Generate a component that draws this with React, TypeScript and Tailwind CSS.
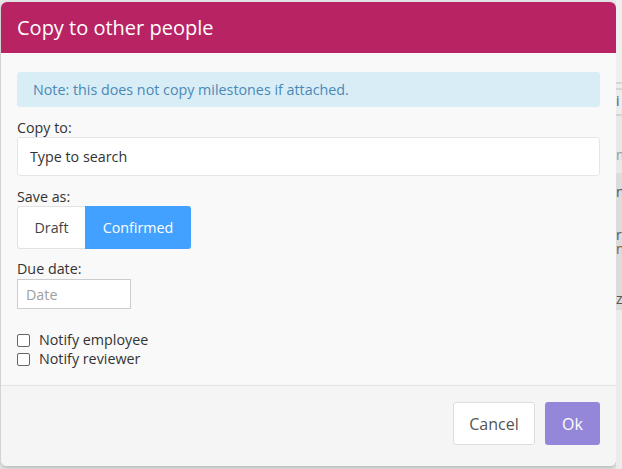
import React from "react";

function Backdrop() {
  // sliver of the page behind the modal, visible on the right edge
  return (
    <div className="flex h-full w-[6px] flex-col overflow-hidden text-[14px] leading-[14px] text-[#555]">
      <div className="h-[82px] shrink-0 bg-[#efefef]" />
      <div className="h-[2px] shrink-0 bg-[#d6d6d6]" />
      <div className="h-[4px] shrink-0 bg-[#ededed]" />
      <div className="h-[2px] shrink-0 bg-[#d6d6d6]" />
      <div className="h-[24px] shrink-0 bg-[#ececec] pt-[4px]">i</div>
      <div className="h-[2px] shrink-0 bg-[#d3d3d3]" />
      <div className="h-[57px] shrink-0 bg-[#e8e8e8] pt-[32px] text-[#999]">m</div>
      <div className="flex h-[137px] shrink-0 flex-col bg-[#dcdcdc] pt-[12px]">
        <span>n</span>
        <span className="mt-[29px]">r</span>
        <span className="text-[#8a5a2a]">n</span>
        <span className="mt-[36px]">z</span>
      </div>
      <div className="flex-1 bg-[#ececec]" />
    </div>
  );
}

export default function App() {
  return (
    <div
      className="flex h-[469px] w-[622px] overflow-hidden bg-[#e6e6e6]"
      style={{ fontFamily: '"Open Sans", "Noto Sans", sans-serif' }}
    >
      <div className="ml-[1px] mt-[2px] flex h-[464px] w-[615px] shrink-0 flex-col overflow-hidden rounded-[6px] bg-[#f9f9f9] shadow-[0_2px_4px_rgba(0,0,0,0.2)]">
        <div className="flex h-[51px] items-center bg-[#b82364] px-4">
          <h2 className="text-[20px] text-white">Copy to other people</h2>
        </div>

        <div className="flex flex-1 flex-col px-4 pt-[19px] text-[14.3px]">
          <div className="flex h-[35px] items-center rounded-[3px] bg-[#d9edf7] px-4 text-[#4a89b5]">
            Note: this does not copy milestones if attached.
          </div>

          <label className="mt-[12px] leading-[18px] text-[#333]">Copy to:</label>
          <input
            className="h-[39px] rounded-[3px] border border-[#e6e6e6] bg-white px-3 text-[#333] placeholder:text-[#333] outline-none"
            placeholder="Type to search"
          />

          <label className="mt-[12px] leading-[18px] text-[#333]">Save as:</label>
          <div className="flex h-[43px] w-[174px]">
            <button className="w-[68px] rounded-l-[3px] border border-r-0 border-[#e2e2e2] bg-white text-[#444]">
              Draft
            </button>
            <button className="w-[106px] rounded-r-[3px] bg-[#42a0ff] text-white">Confirmed</button>
          </div>

          <label className="mt-[11px] leading-[18px] text-[#333]">Due date:</label>
          <input
            className="mt-[1px] h-[30px] w-[114px] border border-[#cccccc] bg-white px-2 placeholder:text-[#a0a0a0] outline-none"
            placeholder="Date"
          />

          <div className="mt-[24px] flex flex-col gap-[5px] leading-[14px] text-[#333]">
            <label className="flex items-center gap-[9px]">
              <span className="h-[13px] w-[13px] rounded-[2px] border border-[#666] bg-white" />
              Notify employee
            </label>
            <label className="flex items-center gap-[9px]">
              <span className="h-[13px] w-[13px] rounded-[2px] border border-[#666] bg-white" />
              Notify reviewer
            </label>
          </div>
        </div>

        <div className="flex h-[81px] items-start justify-end gap-[10px] border-t border-[#e3e3e3] bg-[#f5f5f5] pr-[16px] pt-[16px]">
          <button className="h-[43px] w-[82px] rounded-[3px] border border-[#dddddd] bg-white text-[16px] text-[#555]">
            Cancel
          </button>
          <button className="h-[43px] w-[55px] rounded-[3px] bg-[#9486d8] text-[16px] text-white">Ok</button>
        </div>
      </div>
      <Backdrop />
    </div>
  );
}
